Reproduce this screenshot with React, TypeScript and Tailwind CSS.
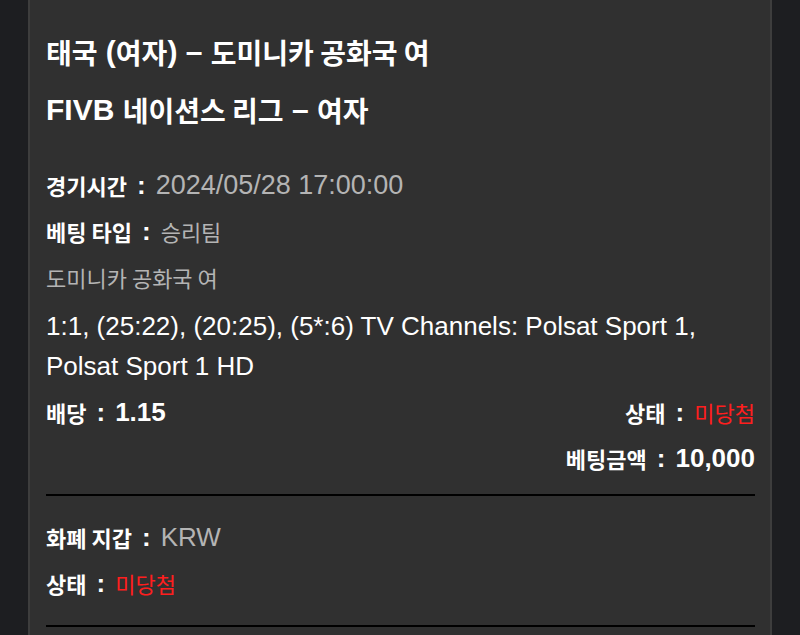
const ko = "text-[22px] font-['Noto_Sans_CJK_KR',sans-serif]";
const koTitle = "text-[28px] font-['Noto_Sans_CJK_KR',sans-serif]";

const Row = ({ label, value, valueClass }: { label: string; value: React.ReactNode; valueClass: string }) => (
    <div className="h-[46px] flex items-center">
        <span className={`${ko} font-bold text-white`}>{label}</span>
        <span className="font-bold text-white mx-[10px]">:</span>
        <span className={valueClass}>{value}</span>
    </div>
);

const App = () => {
    return (
        <div className="min-h-screen bg-[#1d1e21] px-[28px] font-['Liberation_Sans','Noto_Sans_CJK_KR',sans-serif] text-[26px] leading-none">
            <div className="bg-[#303030] border-x-2 border-[#3d3d3d] pl-[16px] pr-[15px] pt-[23px] min-h-[635px]">
                <div className="font-bold text-white text-[30px]">
                    <div className="h-[58px] flex items-center">
                        <span className={koTitle}>태국</span>
                        <span>&nbsp;(</span>
                        <span className={koTitle}>여자</span>
                        <span>)&nbsp;–&nbsp;</span>
                        <span className={koTitle}>도미니카 공화국 여</span>
                    </div>
                    <div className="h-[58px] flex items-center">
                        <span>FIVB&nbsp;</span>
                        <span className={koTitle}>네이션스 리그</span>
                        <span>&nbsp;–&nbsp;</span>
                        <span className={koTitle}>여자</span>
                    </div>
                </div>

                <div className="mt-[23px]">
                    <Row label="경기시간" value="2024/05/28 17:00:00" valueClass="text-[27px] text-[#b4b4b4]" />
                    <Row label="베팅 타입" value="승리팀" valueClass={`${ko} text-[#b4b4b4]`} />
                    <div className={`h-[46px] flex items-center ${ko} text-[#b4b4b4]`}>도미니카 공화국 여</div>
                    <p className="mt-[6px] leading-[40px] text-white">
                        1:1, (25:22), (20:25), (5*:6) TV Channels: Polsat Sport 1, Polsat Sport 1 HD
                    </p>
                    <div className="mt-[3px] flex justify-between">
                        <Row label="배당" value="1.15" valueClass="font-bold text-white" />
                        <Row label="상태" value="미당첨" valueClass={`${ko} text-[#ff1e1e]`} />
                    </div>
                    <div className="flex justify-end">
                        <Row label="베팅금액" value="10,000" valueClass="font-bold text-white" />
                    </div>
                </div>

                <div className="mt-[13px] h-[2px] bg-black" />

                <div className="mt-[18px]">
                    <Row label="화폐 지갑" value="KRW" valueClass="text-[#b4b4b4]" />
                    <Row label="상태" value="미당첨" valueClass={`${ko} text-[#ff1e1e]`} />
                </div>

                <div className="mt-[19px] h-[2px] bg-black" />
            </div>
        </div>
    );
};

export default App;
